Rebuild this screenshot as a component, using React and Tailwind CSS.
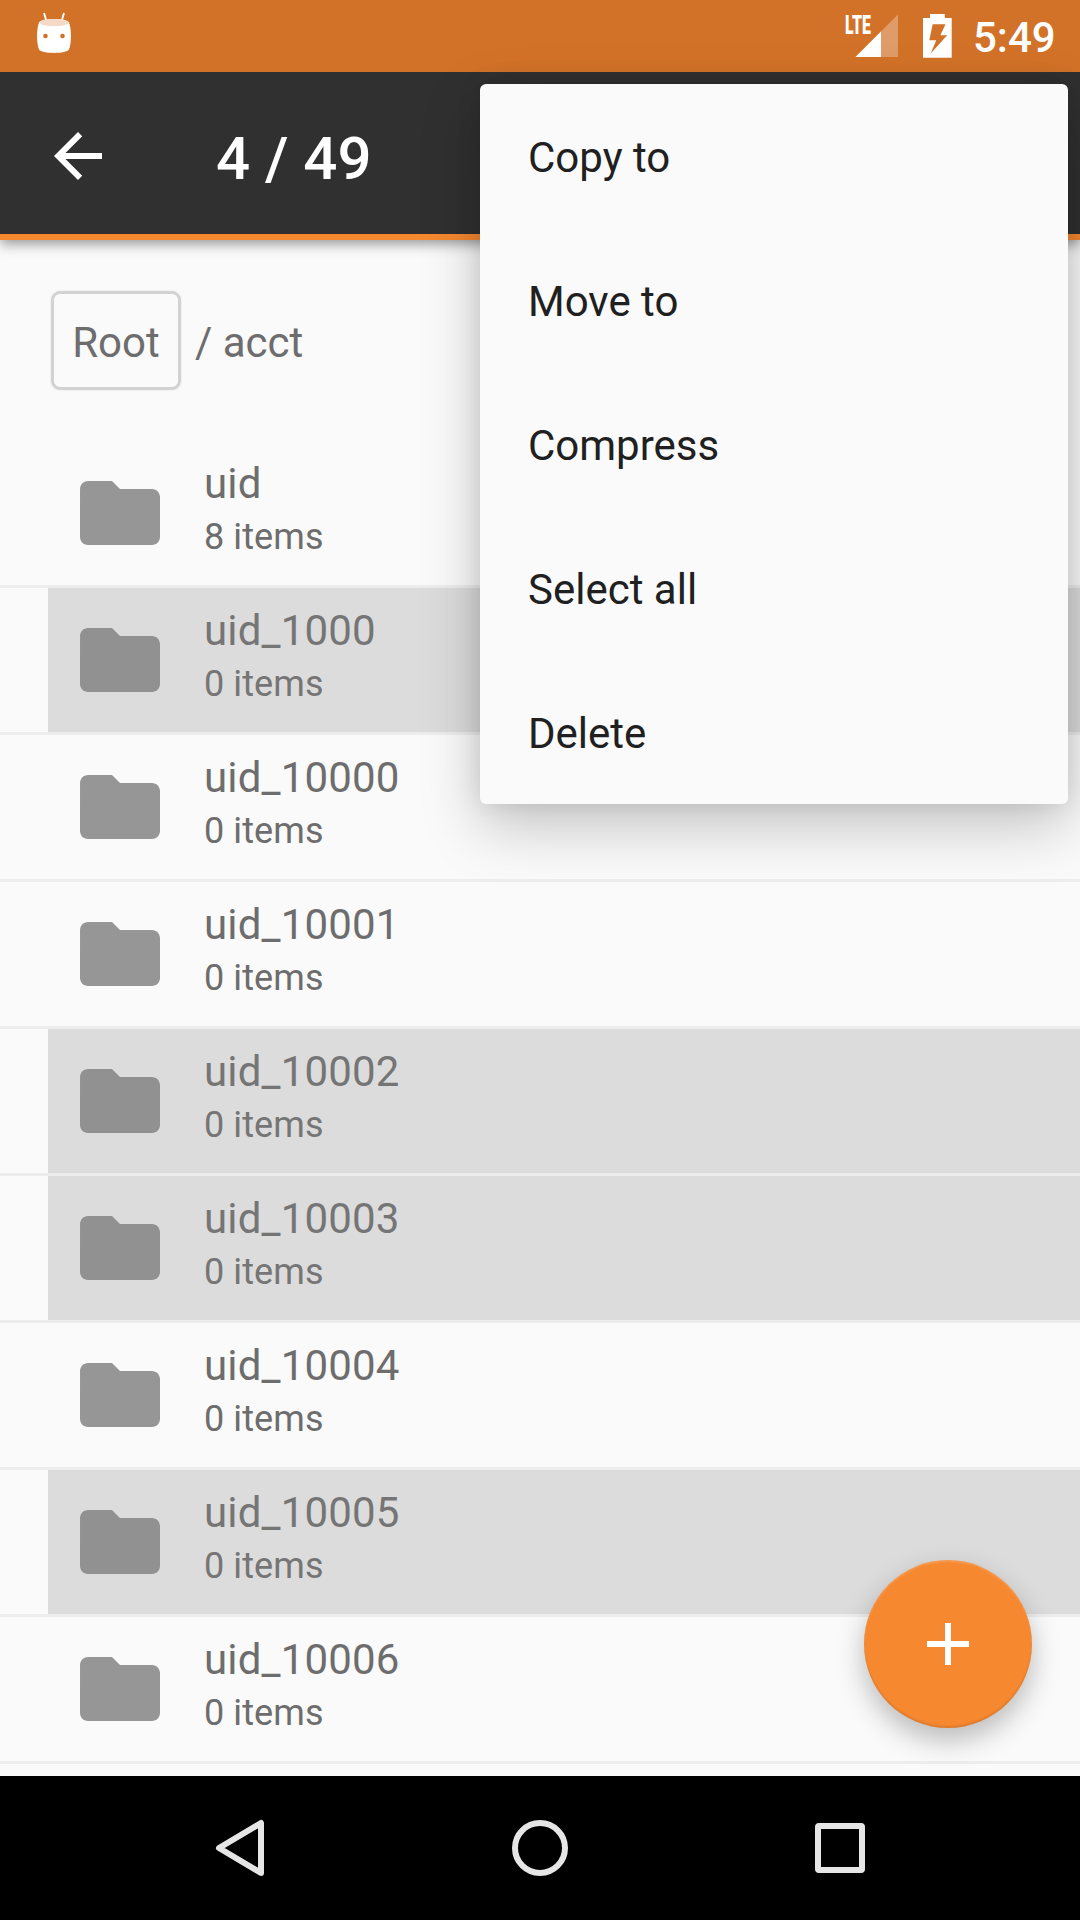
const entries = [
  { name: 'uid', count: 8, selected: false },
  { name: 'uid_1000', count: 0, selected: true },
  { name: 'uid_10000', count: 0, selected: false },
  { name: 'uid_10001', count: 0, selected: false },
  { name: 'uid_10002', count: 0, selected: true },
  { name: 'uid_10003', count: 0, selected: true },
  { name: 'uid_10004', count: 0, selected: false },
  { name: 'uid_10005', count: 0, selected: true },
  { name: 'uid_10006', count: 0, selected: false },
];

const menuItems = ['Copy to', 'Move to', 'Compress', 'Select all', 'Delete'];

function MarshmallowIcon() {
  return (
    <svg className="h-[42px] w-[36px]" viewBox="36 12 36 42" fill="none">
      <path d="M44.2 13.6 46.3 21M63.8 13.6 61.7 21" stroke="#fff" strokeWidth="1.9" strokeLinecap="round" />
      <path d="M39 22.5C41 17.9 67 17.9 69 22.5C71.6 29 71.6 43 69 49.5C66.5 54 41.5 54 39 49.5C36.4 43 36.4 29 39 22.5Z" fill="#fff" />
      <ellipse cx="54" cy="22.7" rx="14.300" ry="3.6" fill="#f4d9c6" />
      <circle cx="45.5" cy="36" r="2.3" fill="#d27228" />
      <circle cx="62.5" cy="36" r="2.3" fill="#d27228" />
    </svg>
  );
}

function SignalIcon() {
  return (
    <div className="relative h-[44px] w-[54px]">
      <svg className="h-[44px] w-[54px]" viewBox="845 14 54 44">
        <path d="M898 14.5V57H855.5Z" fill="#fff" fillOpacity="0.3" />
        <path d="M881 31.5V57H855.5Z" fill="#fff" />
      </svg>
      <span className="absolute top-[-3px] left-0 origin-left scale-x-[0.61] text-[26px] leading-[28px] font-black text-white">LTE</span>
    </div>
  );
}

function BatteryIcon() {
  return (
    <svg className="h-[44px] w-[29px]" viewBox="0 0 29 44">
      <path fillRule="evenodd" d="M7 0H21.8V4H28.7V43.7H0V4H7ZM9.7 10.2 6.3 26.3H13.2L7.7 39.5 24.2 21.2H17.4L22.5 10.2Z" fill="#fff" />
    </svg>
  );
}

function FolderIcon({ selected }) {
  return (
    <svg className={selected ? 'size-24 text-[#919191]' : 'size-24 text-[#969696]'} viewBox="0 0 24 24" fill="currentColor">
      <path d="M10 4H4c-1.1 0-1.99.9-1.99 2L2 18c0 1.1.9 2 2 2h16c1.1 0 2-.9 2-2V8c0-1.1-.9-2-2-2h-8l-2-2z" />
    </svg>
  );
}

function Row({ name, count, selected }) {
  return (
    <li className="h-[147px] border-b-3 border-[#ededed] pl-12">
      <div className={selected ? 'flex h-36 gap-9 bg-[#dcdcdc] pl-6 text-[#757575]' : 'flex h-36 gap-9 pl-6 text-[#6d6d6d]'}>
        <div className="pt-6">
          <FolderIcon selected={selected} />
        </div>
        <div className="flex flex-col gap-1.5 pt-[18px]">
          <span className="text-[42px] leading-[50px] tracking-[0.17px]">{name}</span>
          <span className="text-[36px] leading-[44px] tracking-[0.1px]">{count} items</span>
        </div>
      </div>
    </li>
  );
}

export default function App() {
  return (
    <div className="relative flex h-[1920px] w-[1080px] flex-col overflow-hidden bg-[#fafafa] font-['Roboto',sans-serif]">
      <header className="z-10 flex shrink-0 flex-col shadow-[0_4px_12px_rgba(0,0,0,0.4)]">
        <div className="flex h-[72px] items-start bg-[#d27228] pt-3 pl-9">
          <MarshmallowIcon />
          <div className="ml-auto flex items-start pt-0.5 pr-6">
            <SignalIcon />
            <div className="ml-6">
              <BatteryIcon />
            </div>
            <span className="ml-[21px] w-[83px] text-[42px] leading-[47px] font-medium whitespace-nowrap text-white">5:49</span>
          </div>
        </div>
        <div className="flex h-[168px] items-center border-b-6 border-[#f68830] bg-[#303030] pl-[42px]">
          <svg className="mt-1.5 size-[72px] text-white" viewBox="0 0 24 24" fill="currentColor">
            <path d="M20 11H7.83l5.59-5.59L12 4l-8 8 8 8 1.41-1.41L7.83 13H20v-2z" />
          </svg>
          <h1 className="ml-[102px] pt-[11px] text-[60px] leading-[72px] font-medium text-white">4 / 49</h1>
        </div>
      </header>

      <nav className="flex h-[201px] shrink-0 items-start pt-[51px] pl-[51px] text-[42px] leading-[50px] text-[#6d6d6d]">
        <span className="flex h-[99px] w-[130px] items-center justify-center rounded-[9px] border-3 border-[#d2d2d2] pt-[5px] shadow-[0_0_2px_rgba(0,0,0,0.12)]">Root</span>
        <span className="ml-[14px] pt-[27px]">/ acct</span>
      </nav>

      <ul className="h-[1335px] shrink-0">
        {entries.map((entry) => (
          <Row key={entry.name} {...entry} />
        ))}
      </ul>

      <footer className="z-30 flex h-36 shrink-0 items-center bg-black pl-[213px]">
        <svg className="h-[60px] w-[54px]" viewBox="213 1818 54 60" fill="none">
          <path d="M261 1823V1873L219 1848Z" stroke="#e6e6e6" strokeWidth="6" strokeLinejoin="round" />
        </svg>
        <svg className="ml-[243px] size-[60px]" viewBox="0 0 60 60" fill="none">
          <circle cx="30" cy="30" r="25" stroke="#e6e6e6" strokeWidth="6" />
        </svg>
        <svg className="ml-[240px] size-[60px]" viewBox="0 0 60 60" fill="none">
          <rect x="8" y="8" width="44" height="44" rx="1" stroke="#e6e6e6" strokeWidth="6" />
        </svg>
      </footer>

      <button className="absolute top-[1560px] left-[864px] z-10 flex size-[168px] items-center justify-center rounded-full bg-[#f68830] shadow-[0_12px_28px_rgba(0,0,0,0.26),inset_0_-2px_2px_rgba(0,0,0,0.1),inset_0_2px_2px_rgba(255,255,255,0.15)]">
        <svg className="size-[42px]" viewBox="0 0 42 42">
          <path d="M18 0H24V18H42V24H24V42H18V24H0V18H18Z" fill="#fff" />
        </svg>
      </button>

      <div className="absolute top-[84px] left-[480px] z-20 w-[588px] rounded-[6px] bg-[#fafafa] shadow-[0_22px_60px_rgba(0,0,0,0.22),0_0_24px_rgba(0,0,0,0.1)]">
        {menuItems.map((label) => (
          <div key={label} className="flex h-36 items-center pt-1 pl-12 text-[42px] leading-[50px] text-[#202020]">
            {label}
          </div>
        ))}
      </div>
    </div>
  );
}
